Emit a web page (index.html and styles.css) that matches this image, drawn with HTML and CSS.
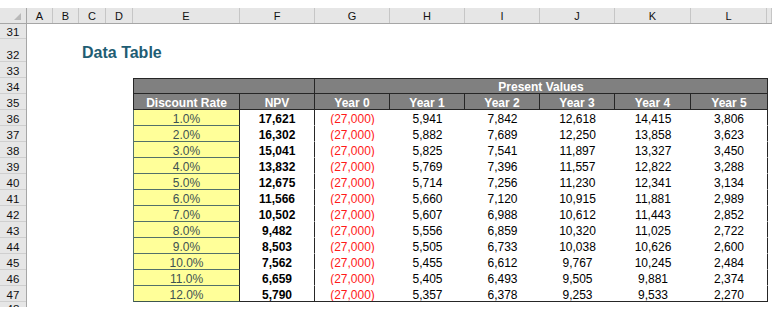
FILE: index.html
```html
<!DOCTYPE html>
<html lang="en">
<head>
    <meta charset="UTF-8">
    <meta name="viewport" content="width=device-width, initial-scale=1.0">
    <title>Data Table - Present Values</title>
    <link rel="stylesheet" href="styles.css">
</head>
<body>
    <div class="sheet">
        <div class="corner"><span class="select-all"></span></div>

        <div class="col-heads">
            <div class="col-head">A</div>
            <div class="col-head">B</div>
            <div class="col-head">C</div>
            <div class="col-head">D</div>
            <div class="col-head">E</div>
            <div class="col-head">F</div>
            <div class="col-head">G</div>
            <div class="col-head">H</div>
            <div class="col-head">I</div>
            <div class="col-head">J</div>
            <div class="col-head">K</div>
            <div class="col-head">L</div>
            <div class="col-head"></div>
        </div>

        <div class="row-heads">
            <div class="row-head">31</div>
            <div class="row-head">32</div>
            <div class="row-head">33</div>
            <div class="row-head">34</div>
            <div class="row-head">35</div>
            <div class="row-head">36</div>
            <div class="row-head">37</div>
            <div class="row-head">38</div>
            <div class="row-head">39</div>
            <div class="row-head">40</div>
            <div class="row-head">41</div>
            <div class="row-head">42</div>
            <div class="row-head">43</div>
            <div class="row-head">44</div>
            <div class="row-head">45</div>
            <div class="row-head">46</div>
            <div class="row-head">47</div>
            <div class="row-head partial">48</div>
        </div>

        <div class="cells">
            <div class="blank-row"></div>
            <div class="title-row">
                <h2 class="title">Data Table</h2>
            </div>
            <div class="blank-row tall"></div>

            <table class="data-table">
                <colgroup>
                    <col class="col-rate">
                    <col class="col-npv">
                    <col class="col-year">
                    <col class="col-year">
                    <col class="col-year">
                    <col class="col-year">
                    <col class="col-year-wide">
                    <col class="col-year-last">
                </colgroup>
                <thead>
                    <tr class="band">
                        <th colspan="2" class="first"></th>
                        <th colspan="6">Present Values</th>
                    </tr>
                    <tr class="heads">
                        <th class="first">Discount Rate</th>
                        <th>NPV</th>
                        <th>Year 0</th>
                        <th>Year 1</th>
                        <th>Year 2</th>
                        <th>Year 3</th>
                        <th>Year 4</th>
                        <th>Year 5</th>
                    </tr>
                </thead>
                <tbody>
                    <tr><td class="rate">1.0%</td><td class="npv">17,621</td><td class="neg">(27,000)</td><td>5,941</td><td>7,842</td><td>12,618</td><td>14,415</td><td class="last">3,806</td></tr>
                    <tr><td class="rate">2.0%</td><td class="npv">16,302</td><td class="neg">(27,000)</td><td>5,882</td><td>7,689</td><td>12,250</td><td>13,858</td><td class="last">3,623</td></tr>
                    <tr><td class="rate">3.0%</td><td class="npv">15,041</td><td class="neg">(27,000)</td><td>5,825</td><td>7,541</td><td>11,897</td><td>13,327</td><td class="last">3,450</td></tr>
                    <tr><td class="rate">4.0%</td><td class="npv">13,832</td><td class="neg">(27,000)</td><td>5,769</td><td>7,396</td><td>11,557</td><td>12,822</td><td class="last">3,288</td></tr>
                    <tr><td class="rate">5.0%</td><td class="npv">12,675</td><td class="neg">(27,000)</td><td>5,714</td><td>7,256</td><td>11,230</td><td>12,341</td><td class="last">3,134</td></tr>
                    <tr><td class="rate">6.0%</td><td class="npv">11,566</td><td class="neg">(27,000)</td><td>5,660</td><td>7,120</td><td>10,915</td><td>11,881</td><td class="last">2,989</td></tr>
                    <tr><td class="rate">7.0%</td><td class="npv">10,502</td><td class="neg">(27,000)</td><td>5,607</td><td>6,988</td><td>10,612</td><td>11,443</td><td class="last">2,852</td></tr>
                    <tr><td class="rate">8.0%</td><td class="npv">9,482</td><td class="neg">(27,000)</td><td>5,556</td><td>6,859</td><td>10,320</td><td>11,025</td><td class="last">2,722</td></tr>
                    <tr><td class="rate">9.0%</td><td class="npv">8,503</td><td class="neg">(27,000)</td><td>5,505</td><td>6,733</td><td>10,038</td><td>10,626</td><td class="last">2,600</td></tr>
                    <tr><td class="rate">10.0%</td><td class="npv">7,562</td><td class="neg">(27,000)</td><td>5,455</td><td>6,612</td><td>9,767</td><td>10,245</td><td class="last">2,484</td></tr>
                    <tr><td class="rate">11.0%</td><td class="npv">6,659</td><td class="neg">(27,000)</td><td>5,405</td><td>6,493</td><td>9,505</td><td>9,881</td><td class="last">2,374</td></tr>
                    <tr class="final"><td class="rate">12.0%</td><td class="npv">5,790</td><td class="neg">(27,000)</td><td>5,357</td><td>6,378</td><td>9,253</td><td>9,533</td><td class="last">2,270</td></tr>
                </tbody>
            </table>
        </div>
    </div>
</body>
</html>
```

FILE: styles.css
```css
* {
    margin: 0;
    padding: 0;
    box-sizing: border-box;
}

body {
    font-family: "Liberation Sans", Arial, sans-serif;
    font-size: 12px;
    color: #000;
    background: #fff;
}

.sheet {
    display: grid;
    grid-template-columns: 27px 745px;
    grid-template-rows: 16px 283px;
    margin-top: 8px;
}

/* headers */
.corner {
    background: #e6e6e6;
    border-right: 1px solid #a6a6a6;
    border-bottom: 1px solid #a6a6a6;
    display: flex;
    justify-content: flex-end;
    align-items: flex-end;
    padding: 0 5px 3px 0;
}

.select-all {
    width: 0;
    height: 0;
    border-left: 7px solid transparent;
    border-bottom: 7px solid #b9b9b9;
}

.col-heads {
    display: grid;
    grid-template-columns: 26px 26px 27px 27px 107px 75px 75px 75px 75px 75px 76px 76px 5px;
    background: #e6e6e6;
    border-bottom: 1px solid #a6a6a6;
}

.col-head {
    font-size: 11px;
    line-height: 17px;
    height: 15px;
    text-align: center;
    color: #111;
    border-right: 1px solid #c6c6c6;
}

.row-heads {
    display: grid;
    grid-template-rows: 15px 23px repeat(15, 16px) 5px;
    background: #e6e6e6;
    border-right: 1px solid #a6a6a6;
    overflow: hidden;
}

.row-head {
    display: flex;
    align-items: flex-end;
    justify-content: center;
    font-size: 11.5px;
    line-height: 11px;
    color: #111;
    border-bottom: 1px solid #cfcfcf;
}

.row-head.partial {
    align-items: flex-start;
    padding-top: 2px;
    border-bottom: none;
}

/* sheet body */
.cells {
    overflow: hidden;
}

.blank-row {
    height: 15px;
}

.blank-row.tall {
    height: 16px;
}

.title-row {
    height: 23px;
    padding: 4px 0 0 55px;
}

.title {
    font-size: 16px;
    line-height: 19px;
    font-weight: bold;
    color: #1f5d73;
}

.data-table {
    margin-left: 106px;
    width: 635px;
    table-layout: fixed;
    border-collapse: separate;
    border-spacing: 0;
}

.col-rate { width: 107px; }
.col-npv { width: 75px; }
.col-year { width: 75px; }
.col-year-wide { width: 76px; }
.col-year-last { width: 77px; }

.data-table tr {
    height: 16px;
}

.data-table th,
.data-table td {
    padding: 0;
    line-height: 12px;
    vertical-align: bottom;
    text-align: center;
    white-space: nowrap;
    overflow: hidden;
}

.data-table th {
    background: #808080;
    color: #fff;
    font-weight: bold;
    border-right: 1px solid #262626;
    border-bottom: 1px solid #262626;
}

.data-table th.first {
    border-left: 1px solid #262626;
}

.band th {
    border-top: 1px solid #262626;
}

.data-table td {
    border-bottom: 1px solid transparent;
}

.data-table td.rate {
    background: #ffff99;
    color: #3e5252;
    border-left: 1px solid #52706a;
    border-bottom: 1px solid #52706a;
    border-right: 1px solid #262626;
}

.data-table td.npv {
    font-weight: bold;
    border-right: 1px solid #262626;
}

.data-table td.neg {
    color: #ff1a1a;
}

.data-table td.last {
    border-right: 1px solid #262626;
}

.data-table tr.final td {
    border-bottom: 1px solid #262626;
}

.data-table tr.final td.rate {
    border-bottom: 1px solid #3c5650;
}
```
